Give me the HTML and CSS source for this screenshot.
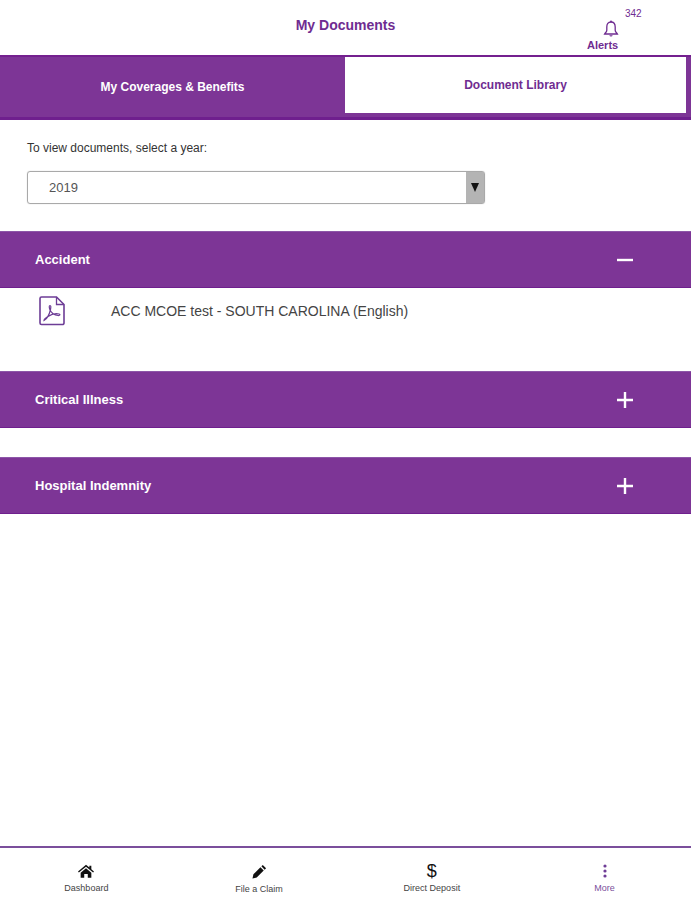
FILE: index.html
```html
<!DOCTYPE html>
<html lang="en">
<head>
  <meta charset="UTF-8">
  <title>My Documents</title>
  <link rel="stylesheet" href="styles.css">
</head>
<body>

<div class="sivu">
  <header class="otsikko">
    <h1>My Documents</h1>
    <div class="halytykset">
      <span class="maara">342</span>
      <svg class="kello" viewBox="0 0 16 18" width="16" height="18">
        <path d="M8 2C5 2 3.8 4.2 3.8 7v3.2C3.8 12 2.4 12.6 1.6 14h12.8c-.8-1.4-2.2-2-2.2-3.8V7C12.200 4.200 11 2 8 2z" fill="none" stroke="#6f2c91" stroke-width="1.300"/>
        <path d="M6.300 15.200a1.800 1.800 0 0 0 3.400 0z" fill="#6f2c91"/>
        <circle cx="8" cy="1.500" r="1" fill="#6f2c91"/>
      </svg>
      <span class="halytys-teksti">Alerts</span>
    </div>
  </header>

  <nav class="valilehdet">
    <a class="valilehti">My Coverages &amp; Benefits</a>
    <a class="valilehti aktiivinen">Document Library</a>
  </nav>

  <main class="sisalto">
    <div class="vuosi">
      <label class="vuosi-otsikko">To view documents, select a year:</label>
      <div class="valinta">
        <span class="valinta-arvo">2019</span>
        <span class="valinta-nuoli"><span class="kolmio"></span></span>
      </div>
    </div>

    <section class="osio">
      <div class="osio-palkki">
        <span>Accident</span>
        <svg class="merkki" viewBox="0 0 18 18" width="18" height="18"><path d="M1 9h16" stroke="#fff" stroke-width="2.400"/></svg>
      </div>
      <div class="dokumentti">
        <svg class="pdf" viewBox="0 0 26 30" width="26" height="30">
          <path d="M2.500 1h15L25 8.500V27a1.500 1.500 0 0 1-1.500 1.500h-21A1.500 1.500 0 0 1 1 27V2.500A1.500 1.500 0 0 1 2.500 1z" fill="none" stroke="#6d3d96" stroke-width="1.600"/>
          <path d="M17.500 1v7.500H25" fill="none" stroke="#6d3d96" stroke-width="1.300"/>
          <path d="M5 24.500c2.500-1.500 5.500-6.500 6.500-11 .5-2.500.5-4-.5-4s-1 2 0 4.500c1.500 3 4.500 5 8 5.500 2 .2 2.500-1 1-1.500-3-.8-8 .5-11.500 2.800-1.500 1-3.500 3-3.500 3.700z" fill="none" stroke="#6d3d96" stroke-width="1.200"/>
        </svg>
        <span>ACC MCOE test - SOUTH CAROLINA (English)</span>
      </div>
    </section>

    <section class="osio">
      <div class="osio-palkki">
        <span>Critical Illness</span>
        <svg class="merkki" viewBox="0 0 18 18" width="18" height="18"><path d="M1 9h16M9 1v16" stroke="#fff" stroke-width="2.400"/></svg>
      </div>
    </section>

    <section class="osio">
      <div class="osio-palkki">
        <span>Hospital Indemnity</span>
        <svg class="merkki" viewBox="0 0 18 18" width="18" height="18"><path d="M1 9h16M9 1v16" stroke="#fff" stroke-width="2.400"/></svg>
      </div>
    </section>
  </main>

  <footer class="alapalkki">
    <a class="kohta">
      <svg viewBox="0 0 18 15" width="16" height="14"><path d="M9 .5 0 8l1 1.200L9 2.600l8 6.600L18 8l-3-2.500V1.500h-2.200v2.200zM3 9.500V15h4v-4h4v4h4V9.500L9 4.500z" fill="#111"/></svg>
      <span>Dashboard</span>
    </a>
    <a class="kohta">
      <svg viewBox="0 0 16 16" width="15" height="15"><path d="M11.500 1 15 4.500 13.500 6 10 2.500zM9 3.500 12.500 7l-7.500 7.500-4.500 1 1-4.500z" fill="#111"/></svg>
      <span>File a Claim</span>
    </a>
    <a class="kohta kohta-alas">
      <span class="dollari">$</span>
      <span>Direct Deposit</span>
    </a>
    <a class="kohta kohta-lisaa">
      <svg viewBox="0 0 4 14" width="4" height="14"><circle cx="2" cy="2" r="1.600" fill="#6f3d96"/><circle cx="2" cy="7" r="1.600" fill="#6f3d96"/><circle cx="2" cy="12" r="1.600" fill="#6f3d96"/></svg>
      <span>More</span>
    </a>
  </footer>
</div>

</body>
</html>
```

FILE: styles.css
```css
body {
  margin: 0;
  font-family: "Liberation Sans", Arial, sans-serif;
  background-color: #fff;
}
.sivu {
  display: flex;
  flex-direction: column;
  height: 900px;
  overflow: hidden;
}
.otsikko {
  position: relative;
  height: 55px;
  display: flex;
  justify-content: center;
  padding-top: 17px;
  box-sizing: border-box;
}
.otsikko h1 {
  margin: 0;
  font-size: 14px;
  line-height: 17px;
  color: #6f2c91;
}
.halytykset {
  position: absolute;
  top: 0;
  left: 570px;
  width: 80px;
  height: 55px;
  color: #6f2c91;
}
.maara {
  position: absolute;
  left: 55px;
  top: 8px;
  font-size: 10px;
  line-height: 12px;
}
.kello {
  position: absolute;
  left: 33px;
  top: 20px;
}
.halytys-teksti {
  position: absolute;
  left: 17px;
  top: 39px;
  font-size: 11px;
  line-height: 13px;
  font-weight: bold;
}
.valilehdet {
  display: flex;
  height: 65px;
  box-sizing: border-box;
  background-color: #7d3596;
  border-top: 2px solid #74208f;
  border-bottom: 3px solid #6f1f8e;
}
.valilehti {
  flex: 1;
  display: flex;
  align-items: center;
  justify-content: center;
  font-size: 12px;
  font-weight: bold;
  color: #fff;
}
.aktiivinen {
  flex: none;
  width: 341px;
  height: 56px;
  margin-right: 5px;
  background-color: #fff;
  color: #6f2c91;
}
.sisalto {
  flex: 1;
}
.vuosi {
  padding: 20px 27px 27px;
}
.vuosi-otsikko {
  display: block;
  font-size: 12px;
  line-height: 16px;
  color: #333;
  margin-bottom: 15px;
}
.valinta {
  width: 458px;
  height: 33px;
  box-sizing: border-box;
  display: flex;
  justify-content: space-between;
  border: 1px solid #a9a9a9;
  border-radius: 3px;
  box-shadow: 0 0 1px #bbb;
}
.valinta-arvo {
  padding-left: 21px;
  font-size: 13px;
  line-height: 31px;
  color: #555;
}
.valinta-nuoli {
  width: 18px;
  display: flex;
  align-items: center;
  justify-content: center;
  background-color: #b4b4b4;
}
.kolmio {
  border-left: 4px solid transparent;
  border-right: 4px solid transparent;
  border-top: 9px solid #111;
}
.osio {
  margin-bottom: 29px;
}
.osio-palkki {
  height: 57px;
  box-sizing: border-box;
  display: flex;
  align-items: center;
  justify-content: space-between;
  padding: 0 57px 0 35px;
  background-color: #7d3596;
  border-top: 1px solid #8d56a8;
  border-bottom: 1px solid #6f1f8e;
  color: #fff;
  font-size: 13px;
  font-weight: bold;
}
.dokumentti {
  height: 54px;
  box-sizing: border-box;
  display: flex;
  align-items: center;
  padding: 0 0 8px 39px;
  font-size: 14px;
  color: #444;
}
.pdf {
  margin-right: 46px;
}
.alapalkki {
  height: 54px;
  box-sizing: border-box;
  display: flex;
  border-top: 2px solid #7b4f9c;
  position: relative;
}
.kohta {
  flex: 1;
  display: flex;
  flex-direction: column;
  align-items: center;
  gap: 5px;
  padding-top: 16px;
  font-size: 9px;
  line-height: 11px;
  color: #444;
}
.kohta-alas {
  padding-top: 14px;
  gap: 3px;
}
.kohta-lisaa {
  padding-top: 16px;
  color: #7b4f9c;
}
.dollari {
  font-size: 18px;
  line-height: 18px;
  color: #111;
}
```
